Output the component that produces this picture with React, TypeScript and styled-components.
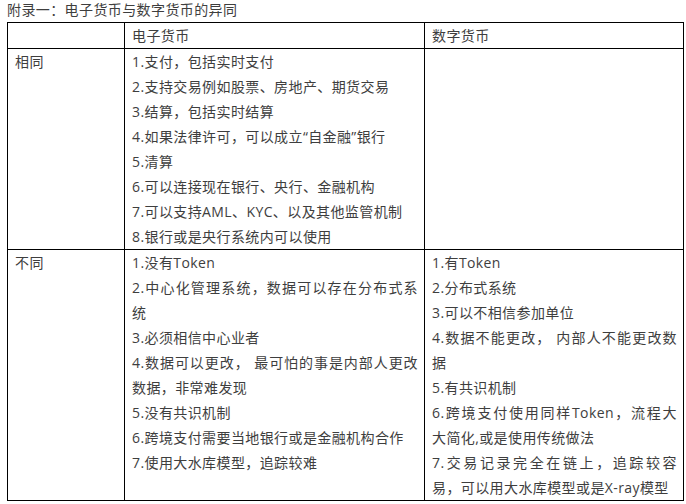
import styled, { createGlobalStyle } from 'styled-components';

const GlobalStyle = createGlobalStyle`
  html, body {
    margin: 0;
    padding: 0;
    background: #fff;
  }
`

const Page = styled.div`
  padding: 0 3px 0 7px;
  color: #3e3e3e;
  font-family: "Open Sans", "Noto Sans CJK SC", sans-serif;
  font-size: 14px;
  letter-spacing: 0.4px;
`
const Title = styled.div`
  line-height: 20px;
  margin-bottom: 2px;
`
const Table = styled.table`
  width: 676px;
  table-layout: fixed;
  border-collapse: collapse;
`
const Col = styled.col<{ $w: number }>`
  width: ${p => p.$w}px;
`
const Cell = styled.td`
  border: 1px solid #000;
  padding: 0 6px 0 7px;
  line-height: 25px;
  vertical-align: top;
`
const Line = styled.div<{ $fill?: boolean }>`
  text-align: justify;
  text-align-last: ${p => (p.$fill ? 'justify' : 'start')};
`

type Item = string | string[]

const rows: { label: string; ecash: Item[]; digital: Item[] }[] = [
  {
    label: '相同',
    ecash: [
      '1.支付，包括实时支付',
      '2.支持交易例如股票、房地产、期货交易',
      '3.结算，包括实时结算',
      '4.如果法律许可，可以成立“自金融”银行',
      '5.清算',
      '6.可以连接现在银行、央行、金融机构',
      '7.可以支持AML、KYC、以及其他监管机制',
      '8.银行或是央行系统内可以使用',
    ],
    digital: [],
  },
  {
    label: '不同',
    ecash: [
      '1.没有Token',
      ['2.中心化管理系统，数据可以存在分布式系', '统'],
      '3.必须相信中心业者',
      ['4.数据可以更改， 最可怕的事是内部人更改', '数据，非常难发现'],
      '5.没有共识机制',
      '6.跨境支付需要当地银行或是金融机构合作',
      '7.使用大水库模型，追踪较难',
    ],
    digital: [
      '1.有Token',
      '2.分布式系统',
      '3.可以不相信参加单位',
      ['4.数据不能更改， 内部人不能更改数', '据'],
      '5.有共识机制',
      ['6.跨境支付使用同样Token，流程大', '大简化,或是使用传统做法'],
      ['7.交易记录完全在链上，追踪较容', '易，可以用大水库模型或是X-ray模型'],
    ],
  },
]

function Entry({ item }: { item: Item }) {
  const lines = typeof item === 'string' ? [item] : item
  return <>
    {lines.map((text, i) => (
      <Line key={i} $fill={i < lines.length - 1}>{text}</Line>
    ))}
  </>
}

export default function App() {
  return <>
    <GlobalStyle />
    <Page>
      <Title>附录一：电子货币与数字货币的异同</Title>
      <Table>
        <colgroup>
          <Col $w={117} />
          <Col $w={300} />
          <Col $w={259} />
        </colgroup>
        <tbody>
          <tr>
            <Cell></Cell>
            <Cell>电子货币</Cell>
            <Cell>数字货币</Cell>
          </tr>
          {rows.map(row => (
            <tr key={row.label}>
              <Cell>{row.label}</Cell>
              <Cell>{row.ecash.map((item, i) => <Entry key={i} item={item} />)}</Cell>
              <Cell>{row.digital.map((item, i) => <Entry key={i} item={item} />)}</Cell>
            </tr>
          ))}
        </tbody>
      </Table>
    </Page>
  </>
}
